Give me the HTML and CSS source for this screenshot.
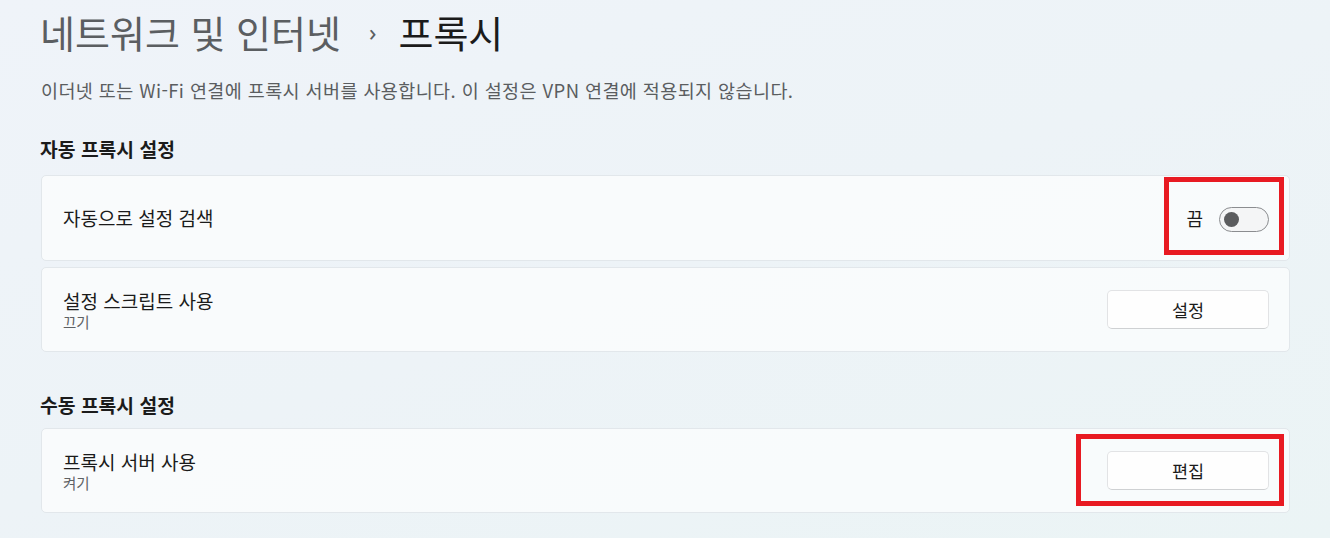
FILE: index.html
```html
<!DOCTYPE html>
<html lang="ko">
<head>
<meta charset="utf-8">
<link rel="stylesheet" href="styles.css">
</head>
<body>
<main class="page">
  <h1 class="title"><span class="crumb">네트워크 및 인터넷</span><span class="chev">›</span><span class="current">프록시</span></h1>
  <p class="desc">이더넷 또는 Wi-Fi 연결에 프록시 서버를 사용합니다. 이 설정은 VPN 연결에 적용되지 않습니다.</p>

  <h2 class="section">자동 프록시 설정</h2>
  <div class="card card-tall">
    <div class="label"><div class="name">자동으로 설정 검색</div></div>
    <div class="control">
      <span class="state">끔</span>
      <span class="toggle"><span class="knob"></span></span>
    </div>
    <div class="mark mark-toggle"></div>
  </div>
  <div class="card card-gap">
    <div class="label"><div class="name">설정 스크립트 사용</div><div class="sub">끄기</div></div>
    <button class="btn">설정</button>
  </div>

  <h2 class="section section-2">수동 프록시 설정</h2>
  <div class="card card-second">
    <div class="label"><div class="name">프록시 서버 사용</div><div class="sub">켜기</div></div>
    <button class="btn">편집</button>
    <div class="mark mark-btn"></div>
  </div>
</main>
</body>
</html>
```
FILE: styles.css
```css
html, body {
  margin: 0;
  height: 100%;
}
body {
  background: linear-gradient(160deg, #eff3f9 0%, #edf3f7 50%, #ebf4f5 100%);
  font-family: "Noto Sans CJK KR", "Noto Sans", sans-serif;
  color: #1b1b1b;
  overflow: hidden;
}
.page {
  padding: 0 40px 0 41px;
}
.title {
  margin: 0 0 0 -1px;
  height: 64px;
  line-height: 64px;
  font-size: 38px;
  font-weight: 400;
  display: flex;
  align-items: center;
}
.crumb { color: #5b5e61; }
.chev {
  color: #5b5e61;
  font-size: 24px;
  margin: 0 22px 0 28px;
  font-family: "Noto Sans", sans-serif;
}
.current { color: #1b1b1b; }
.desc {
  margin: 10px 0 0 0;
  font-size: 18.5px;
  letter-spacing: 0.4px;
  line-height: 32px;
  color: #5a5d60;
}
.section {
  margin: 31px 0 0 -1px;
  font-size: 19.3px;
  font-weight: 700;
  line-height: 24px;
  height: 24px;
  color: #1b1b1b;
}
.section-2 { margin-top: 41px; }
.card {
  position: relative;
  margin-top: 14px;
  height: 84px;
  box-sizing: border-box;
  border: 1px solid #e2e7eb;
  border-radius: 5px;
  background: rgba(252, 253, 254, 0.75);
  display: flex;
  align-items: center;
  justify-content: space-between;
  padding: 0 20px 0 21px;
}
.card-tall { height: 86px; }
.card-gap { margin-top: 6px; height: 85px; }
.card-second { margin-top: 11px; height: 85px; }
.name {
  font-size: 19px;
  line-height: 24px;
  color: #1b1b1b;
}
.sub {
  font-size: 14.5px;
  line-height: 18px;
  color: #5e6164;
}
.control {
  display: flex;
  align-items: center;
  gap: 16px;
}
.state {
  font-size: 18px;
  color: #1b1b1b;
}
.toggle {
  width: 50px;
  height: 25px;
  box-sizing: border-box;
  border: 1px solid #8b8d90;
  border-radius: 13px;
  background: #f4f5f6;
  display: flex;
  align-items: center;
  padding-left: 4px;
  margin-top: 2px;
}
.knob {
  width: 15px;
  height: 15px;
  border-radius: 50%;
  background: #5b5c5e;
}
.btn {
  width: 162px;
  height: 39px;
  box-sizing: border-box;
  border: 1px solid #e2e3e5;
  border-bottom-color: #cfd1d3;
  border-radius: 5px;
  background: #fefefe;
  font-family: "Noto Sans CJK KR", "Noto Sans", sans-serif;
  font-size: 17.5px;
  color: #1b1b1b;
  padding: 0;
}
.mark {
  position: absolute;
  border: 5px solid #e81a22;
  box-sizing: border-box;
  right: 5px;
}
.mark-toggle {
  top: 1px;
  width: 120px;
  height: 78px;
}
.mark-btn {
  top: 5px;
  width: 208px;
  height: 72px;
}
```
